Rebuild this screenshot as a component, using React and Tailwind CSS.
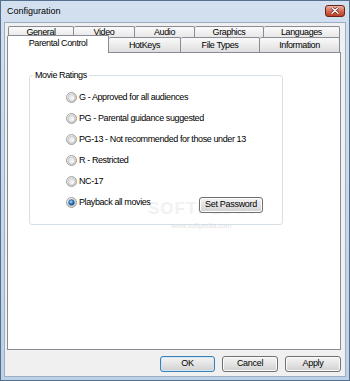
import React from "react";

const font = { fontFamily: '"Liberation Sans", Arial, sans-serif' };

const backTabs = [
  { label: "General", w: "w-[66px] border-l" },
  { label: "Video", w: "w-[61px]" },
  { label: "Audio", w: "w-[60px]" },
  { label: "Graphics", w: "w-[69px]" },
  { label: "Languages", w: "w-[76px]" },
];

const frontTabs = [
  { label: "HotKeys", w: "w-[72px]" },
  { label: "File Types", w: "w-[79px]" },
  { label: "Information", w: "w-[80px]" },
];

const ratings = [
  "G - Approved for all audiences",
  "PG - Parental guidance suggested",
  "PG-13 - Not recommended for those under 13",
  "R - Restricted",
  "NC-17",
];

function Radio({ checked }) {
  return (
    <svg width="11" height="11" viewBox="0 0 11 11" className="shrink-0">
      <defs>
        <radialGradient id="ring" cx="35%" cy="30%" r="75%">
          <stop offset="0%" stopColor="#ffffff" />
          <stop offset="100%" stopColor="#c9c9c9" />
        </radialGradient>
        <radialGradient id="well" cx="70%" cy="70%" r="80%">
          <stop offset="0%" stopColor="#fbfbfb" />
          <stop offset="100%" stopColor="#dcdcdc" />
        </radialGradient>
        <radialGradient id="dot" cx="40%" cy="35%" r="70%">
          <stop offset="0%" stopColor="#a8defc" />
          <stop offset="55%" stopColor="#2b7cc4" />
          <stop offset="100%" stopColor="#0d3f78" />
        </radialGradient>
      </defs>
      <circle cx="5.5" cy="5.5" r="5" fill="url(#ring)" stroke="#a3a3a3" strokeWidth="1" />
      <circle cx="5.5" cy="5.5" r="3.4" fill="url(#well)" stroke="#bdbdbd" strokeWidth="0.6" />
      {checked && <circle cx="5.5" cy="5.5" r="2.8" fill="url(#dot)" stroke="#174a7c" strokeWidth="0.5" />}
    </svg>
  );
}

function Button({ children, primary, className = "" }) {
  return (
    <div
      className={`flex items-center justify-center rounded-[3px] border h-[16px] text-[9px] tracking-[-0.3px] text-black bg-linear-to-b from-[#f4f4f4] via-[#e4e4e4] to-[#d0d0d0] ${
        primary ? "border-[#3c7fb1] shadow-[inset_0_0_0_1px_#cde8f8]" : "border-[#707070] shadow-[inset_0_0_0_1px_#fbfbfb]"
      } ${className}`}
    >
      {children}
    </div>
  );
}

export default function App() {
  return (
    <div style={font} className="w-[350px] h-[381px] flex flex-col border border-[#54708f] bg-linear-to-b from-[#d3e0ef] to-[#bdd0e5] select-none">
      {/* title bar */}
      <div className="h-[21px] flex items-center justify-between pl-[6px] pr-[4px]">
        <span className="text-[9px] text-black">Configuration</span>
        <div className="w-[20px] h-[12px] mt-[-2px] rounded-[3px] border border-[#6b2417] bg-linear-to-b from-[#eab1a2] via-[#d56a52] to-[#b93d25] flex items-center justify-center">
          <svg width="8" height="7" viewBox="0 0 8 7">
            <path d="M1 0.8 L7 6.2 M7 0.8 L1 6.2" stroke="#5a1a10" strokeWidth="2.6" strokeLinecap="round" />
            <path d="M1 0.8 L7 6.2 M7 0.8 L1 6.2" stroke="#ffffff" strokeWidth="1.5" strokeLinecap="round" />
          </svg>
        </div>
      </div>

      {/* client */}
      <div className="flex-1 mx-[3px] mb-[3px] bg-[#f0f0f0] border border-[#9aaec6] pt-[3px] pl-[2px] pr-[4px] flex flex-col text-[9px] tracking-[-0.4px] text-black">
        {/* back tab row */}
        <div className="flex h-[11px] ml-[1px] items-start">
          {backTabs.map((t) => (
            <div
              key={t.label}
              className={`${t.w} h-[14px] shrink-0 border-t border-r border-[#898c95] rounded-t-[2px] bg-linear-to-b from-[#fafafa] to-[#e2e2e2] flex justify-center leading-[10px]`}
            >
              {t.label}
            </div>
          ))}
        </div>
        {/* front tab row */}
        <div className="relative z-[5] flex h-[15px] items-start">
          <div className="relative z-10 w-[102px] h-[18px] -mt-[2px] border-l border-t border-r border-[#898c95] rounded-t-[2px] bg-white flex justify-center pt-[2px] leading-[11px]">
            Parental Control
          </div>
          {frontTabs.map((t) => (
            <div
              key={t.label}
              className={`${t.w} h-[15px] border-t border-r border-[#898c95] rounded-t-[2px] bg-linear-to-b from-[#fafafa] to-[#dedede] flex items-center justify-center leading-[11px]`}
            >
              {t.label}
            </div>
          ))}
        </div>

        {/* panel */}
        <div className="relative h-[298px] w-[334px] border border-[#898c95] bg-white pt-[22px] pl-[21px]">
          {/* watermark, under the content */}
          <div className="absolute left-[140px] top-[147px] z-0 pointer-events-none flex flex-col items-center">
            <span className="text-[17px] tracking-[1px] leading-[18px] text-[#f1f1f1] font-bold">SOFTPEDIA</span>
            <span className="text-[7px] tracking-[0px] leading-[8px] mt-[4px] text-[#e2e2e2]">www.softpedia.com</span>
          </div>

          <div className="relative z-10 w-[254px] h-[150px] border border-[#d5dfe5] rounded-[3px] pt-[11px]">
            <span className="absolute left-[3px] top-[-7px] h-[12px] leading-[12px] px-[2px] bg-white">Movie Ratings</span>
            {ratings.map((r) => (
              <div key={r} className="h-[21px] flex items-center pl-[36px] gap-[2px]">
                <Radio />
                <span className="leading-[11px]">{r}</span>
              </div>
            ))}
            <div className="h-[21px] flex items-center pl-[36px] pr-[19px] gap-[2px]">
              <Radio checked />
              <span className="leading-[11px]">Playback all movies</span>
              <Button className="ml-auto mt-[4px] w-[64px]">Set Password</Button>
            </div>
          </div>
        </div>

        {/* buttons */}
        <div className="flex justify-end gap-[7px] mt-[6px]">
          <Button primary className="w-[55px]">OK</Button>
          <Button className="w-[56px]">Cancel</Button>
          <Button className="w-[56px]">Apply</Button>
        </div>
      </div>
    </div>
  );
}
